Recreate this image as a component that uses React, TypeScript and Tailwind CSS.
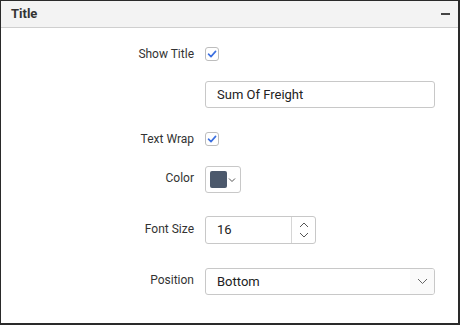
import React from "react";

const font = { fontFamily: "Roboto, 'Noto Sans', sans-serif" };

function Check() {
  return (
    <div className="w-[14px] h-[14px] rounded-[3px] border border-[#bdbdbd] bg-white flex items-center justify-center">
      <svg width="10" height="10" viewBox="0 0 10 10">
        <path d="M1.5 5.2 L4 7.6 L8.6 2.4" fill="none" stroke="#3b6fe0" strokeWidth="1.6" strokeLinecap="round" strokeLinejoin="round" />
      </svg>
    </div>
  );
}

function Row({ label, mt, h, lift, children }: { label: string; mt: string; h: string; lift?: boolean; children?: React.ReactNode }) {
  return (
    <div className={`flex items-center ${mt} ${h}`}>
      <div className={`w-[193px] text-right text-[12px] text-[#333333] ${lift ? "mb-[3px]" : ""}`}>{label}</div>
      <div className="ml-[11px] flex items-center">{children}</div>
    </div>
  );
}

export default function App() {
  return (
    <div style={font} className="w-[460px] h-[325px] bg-white">
      <div className="w-[460px] h-[325px] border border-[#2a2a2a] border-r-2 border-b-2 flex flex-col">
        <div className="h-[27px] shrink-0 bg-[#f3f3f3] border-b border-[#cfcfcf] flex items-center justify-between pl-[10px] pr-[8px]">
          <span className="text-[13px] font-bold text-[#333333]">Title</span>
          <div className="w-[9px] h-[1.5px] bg-[#444]" />
        </div>
        <div className="flex flex-col">
          <Row label="Show Title" mt="mt-[19px]" h="h-[14px]">
            <Check />
          </Row>
          <Row label="" mt="mt-[20px]" h="h-[27px]">
            <div className="w-[230px] h-[27px] border border-[#c8c8c8] rounded-[3px] flex items-center pl-[11px] text-[13px] text-[#222]">
              Sum Of Freight
            </div>
          </Row>
          <Row label="Text Wrap" mt="mt-[24px]" h="h-[14px]">
            <Check />
          </Row>
          <Row label="Color" mt="mt-[20px]" h="h-[27px]" lift>
            <div className="w-[36px] h-[27px] border border-[#c8c8c8] rounded-[3px] flex items-center pl-[4px] gap-[1px]">
              <div className="w-[17px] h-[17px] rounded-[2px] bg-[#4c596c]" />
              <svg width="8" height="6" viewBox="0 0 8 6">
                <path d="M1 1.5 L4 4.5 L7 1.5" fill="none" stroke="#555" strokeWidth="1" />
              </svg>
            </div>
          </Row>
          <Row label="Font Size" mt="mt-[23px]" h="h-[28px]" lift>
            <div className="w-[111px] h-[28px] border border-[#c8c8c8] rounded-[3px] flex items-center">
              <div className="flex-1 pl-[11px] text-[13px] text-[#222]">16</div>
              <div className="w-[24px] h-full border-l border-[#d6d6d6] flex flex-col items-center justify-center gap-[4px]">
                <svg width="10" height="6" viewBox="0 0 10 6">
                  <path d="M1 5 L5 1 L9 5" fill="none" stroke="#555" strokeWidth="1" />
                </svg>
                <svg width="10" height="6" viewBox="0 0 10 6">
                  <path d="M1 1 L5 5 L9 1" fill="none" stroke="#555" strokeWidth="1" />
                </svg>
              </div>
            </div>
          </Row>
          <Row label="Position" mt="mt-[24px]" h="h-[27px]" lift>
            <div className="w-[230px] h-[27px] border border-[#c8c8c8] rounded-[3px] flex items-center overflow-hidden">
              <div className="flex-1 pl-[11px] text-[13px] text-[#222]">Bottom</div>
              <div className="w-[24px] h-full bg-[#fafafa] flex items-center justify-center">
                <svg width="11" height="7" viewBox="0 0 11 7">
                  <path d="M1 1 L5.5 5.5 L10 1" fill="none" stroke="#666" strokeWidth="1" />
                </svg>
              </div>
            </div>
          </Row>
        </div>
      </div>
    </div>
  );
}
